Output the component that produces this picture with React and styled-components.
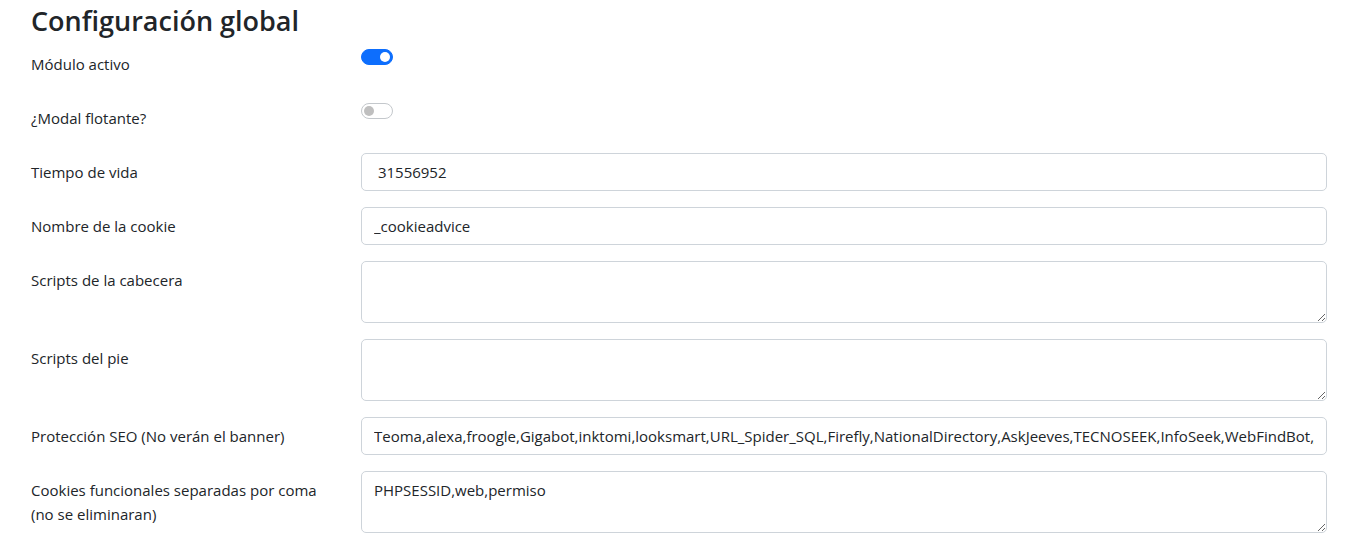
import React from "react";
import styled, { createGlobalStyle } from "styled-components";

const GlobalStyle = createGlobalStyle`
  body {
    margin: 0;
    background: #fff;
    color: #212529;
    font-family: "Open Sans", "Liberation Sans", sans-serif;
    font-size: 16px;
    line-height: 1.5;
  }
  * { box-sizing: border-box; }
`;

const Page = styled.div`
  padding: 5px 4px 0 16px;
`;

const Title = styled.h3`
  margin: 0 15px 8px;
  font-size: 27px;
  font-weight: 600;
  line-height: 1.2;
  color: #212529;
`;

const Row = styled.div`
  display: grid;
  grid-template-columns: 330px 1fr;
  margin-bottom: 16px;
`;

const Label = styled.label`
  padding: 7px 15px;
  font-size: 15px;
  line-height: 24px;
`;

const Field = styled.div`
  padding: 0 15px;
`;

const Input = styled.input`
  display: block;
  width: 100%;
  height: 38px;
  padding: 6px 12px;
  font: inherit;
  font-size: 15px;
  line-height: 24px;
  color: #212529;
  background: #fff;
  border: 1px solid #ced4da;
  border-radius: 5px;
  outline: none;
`;

const TextArea = styled.textarea`
  display: block;
  width: 100%;
  height: 62px;
  padding: 6px 12px;
  font: inherit;
  font-size: 15px;
  line-height: 24px;
  color: #212529;
  background: #fff;
  border: 1px solid #ced4da;
  border-radius: 5px;
  outline: none;
  resize: vertical;
`;

const Switch = styled.span`
  display: block;
  position: relative;
  width: 32px;
  height: 16px;
  margin-top: 4px;
  border-radius: 8px;
  background: ${(p) => (p.$on ? "#0d6efd" : "#fff")};
  border: 1px solid ${(p) => (p.$on ? "#0d6efd" : "#c4c8cc")};

  &::after {
    content: "";
    position: absolute;
    top: 2px;
    left: ${(p) => (p.$on ? "18px" : "2px")};
    width: 10px;
    height: 10px;
    border-radius: 50%;
    background: ${(p) => (p.$on ? "#fff" : "#bfbfbf")};
  }
`;

const seo =
  "Teoma,alexa,froogle,Gigabot,inktomi,looksmart,URL_Spider_SQL,Firefly,NationalDirectory,AskJeeves,TECNOSEEK,InfoSeek,WebFindBot,girafabot,crawler,www.galaxy.com,Googlebot,Scooter,Slurp,msnbot,appie,FAST,WebBug,Spade,ZyBorg,rabaz,Baiduspider,Feedfetcher-Google,TechnoratiSnoop,Rankivabot,Mediapartners-Google,Sogou web spider,WebAlta Crawler,TweetmemeBot,Butterfly,Twitturls,Me.dium,Twiceler";

export default function App() {
  return (
    <Page>
      <GlobalStyle />
      <Title>Configuración global</Title>

      <Row>
        <Label>Módulo activo</Label>
        <Field>
          <Switch $on />
        </Field>
      </Row>

      <Row>
        <Label>¿Modal flotante?</Label>
        <Field>
          <Switch />
        </Field>
      </Row>

      <Row>
        <Label>Tiempo de vida</Label>
        <Field>
          <Input defaultValue=" 31556952" />
        </Field>
      </Row>

      <Row>
        <Label>Nombre de la cookie</Label>
        <Field>
          <Input defaultValue="_cookieadvice" />
        </Field>
      </Row>

      <Row>
        <Label>Scripts de la cabecera</Label>
        <Field>
          <TextArea rows={2} />
        </Field>
      </Row>

      <Row>
        <Label>Scripts del pie</Label>
        <Field>
          <TextArea rows={2} />
        </Field>
      </Row>

      <Row>
        <Label>Protección SEO (No verán el banner)</Label>
        <Field>
          <Input defaultValue={seo} />
        </Field>
      </Row>

      <Row>
        <Label>
          Cookies funcionales separadas por coma
          <br />
          (no se eliminaran)
        </Label>
        <Field>
          <TextArea rows={2} defaultValue="PHPSESSID,web,permiso" />
        </Field>
      </Row>
    </Page>
  );
}
